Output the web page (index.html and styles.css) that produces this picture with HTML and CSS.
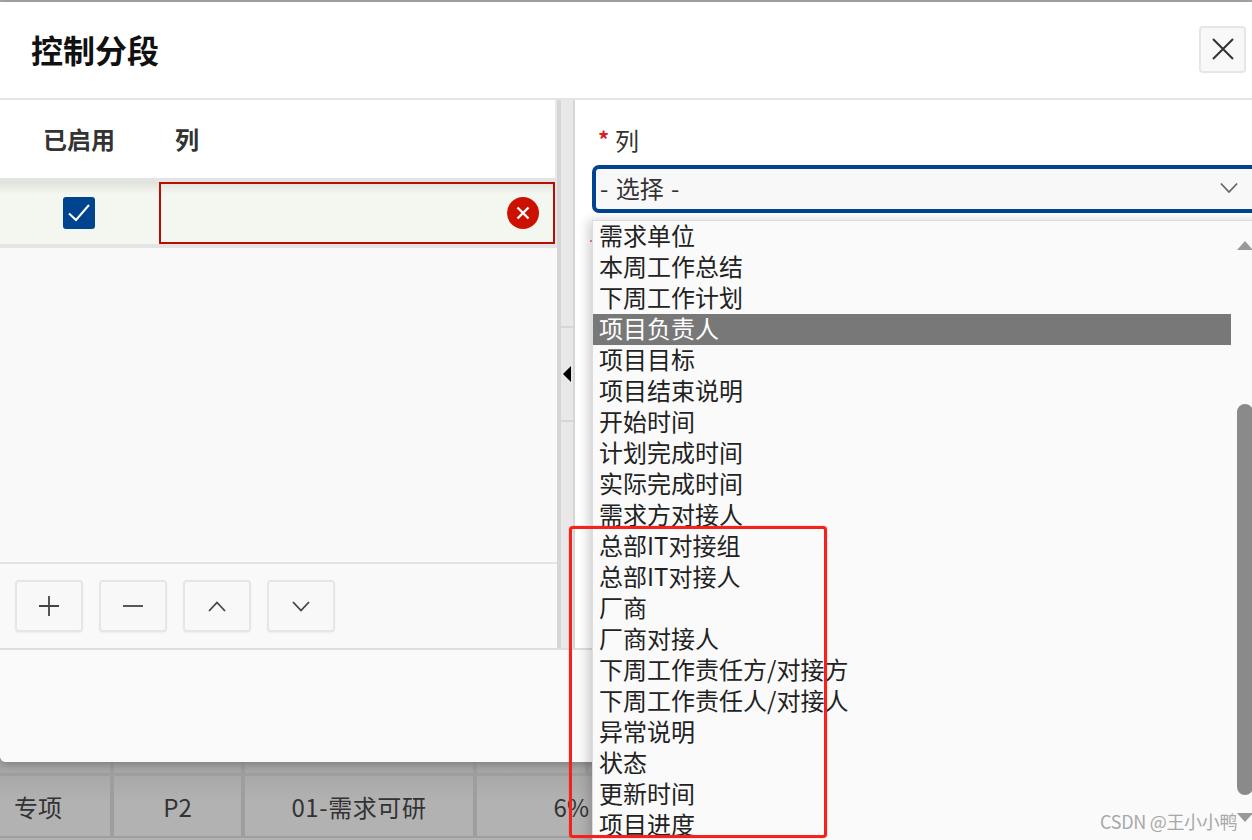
FILE: index.html
```html
<!DOCTYPE html>
<html lang="zh">
<head>
<meta charset="utf-8">
<title>控制分段</title>
<link rel="stylesheet" href="styles.css">
</head>
<body>
<div class="page">
  <div class="dialog">
    <header class="dlg-head">
      <h1 class="dlg-title">控制分段</h1>
      <button class="close-btn" aria-label="关闭">
        <svg width="22" height="22" viewBox="0 0 22 22"><path d="M1 1L21 21M21 1L1 21" class="ico"/></svg>
      </button>
    </header>
    <div class="dlg-body">
      <section class="left">
        <div class="thead">
          <div class="th th-en">已启用</div>
          <div class="th th-col">列</div>
        </div>
        <div class="row">
          <div class="cell-en">
            <span class="check">
              <svg width="24" height="20" viewBox="0 0 24 20"><path d="M2 10.5L9 17L22 2" class="check-path"/></svg>
            </span>
          </div>
          <div class="cell-col">
            <span class="err">
              <svg width="14" height="14" viewBox="0 0 14 14"><path d="M1.5 1.5L12.5 12.5M12.5 1.5L1.5 12.5" class="err-path"/></svg>
            </span>
          </div>
        </div>
        <div class="spacer"></div>
        <div class="toolbar">
          <button class="tool"><svg width="20" height="20" viewBox="0 0 20 20"><path d="M10 0V20M0 10H20" class="ico-thin"/></svg></button>
          <button class="tool"><svg width="20" height="20" viewBox="0 0 20 20"><path d="M0 10H20" class="ico-thin"/></svg></button>
          <button class="tool"><svg width="18" height="11" viewBox="0 0 18 11"><path d="M1 10L9 1.5L17 10" class="ico-thin"/></svg></button>
          <button class="tool"><svg width="18" height="11" viewBox="0 0 18 11"><path d="M1 1L9 9.5L17 1" class="ico-thin"/></svg></button>
        </div>
      </section>
      <div class="gutter"></div>
      <div class="splitter">
        <div class="split-top"></div>
        <div class="split-handle"><span class="tri"></span></div>
        <div class="split-bottom"></div>
      </div>
      <section class="right">
        <div class="label"><span class="star">*</span>列</div>
        <div class="select">
          <span class="select-text">- 选择 -</span>
          <svg width="20" height="12" viewBox="0 0 20 12"><path d="M1 1L10 10.5L19 1" class="ico-light"/></svg>
        </div>
        <div class="field-mark"></div>
      </section>
    </div>
    <div class="dlg-foot"></div>
  </div>
  <div class="bg-table">
    <div class="bg-row bg-row-top">
      <div class="bg-cell"></div><div class="bg-cell"></div><div class="bg-cell"></div><div class="bg-cell"></div>
    </div>
    <div class="bg-row bg-row-main">
      <div class="bg-cell bg-left">专项</div>
      <div class="bg-cell">P2</div>
      <div class="bg-cell bg-wide">01-需求可研</div>
      <div class="bg-cell bg-right">6%</div>
    </div>
  </div>

  <div class="dropdown">
    <ul class="options">
      <li>需求单位</li>
      <li>本周工作总结</li>
      <li>下周工作计划</li>
      <li class="active">项目负责人</li>
      <li>项目目标</li>
      <li>项目结束说明</li>
      <li>开始时间</li>
      <li>计划完成时间</li>
      <li>实际完成时间</li>
      <li>需求方对接人</li>
      <li>总部IT对接组</li>
      <li>总部IT对接人</li>
      <li>厂商</li>
      <li>厂商对接人</li>
      <li>下周工作责任方/对接方</li>
      <li>下周工作责任人/对接人</li>
      <li>异常说明</li>
      <li>状态</li>
      <li>更新时间</li>
      <li>项目进度</li>
    </ul>
    <div class="scroll">
      <span class="arrow-up"></span>
      <span class="thumb"></span>
      <span class="arrow-down"></span>
    </div>
  </div>
  <div class="annot"></div>
  <div class="watermark">CSDN @王小小鸭</div>
</div>
</body>
</html>
```

FILE: styles.css
```css
* { box-sizing: border-box; }
html, body { margin: 0; padding: 0; }
body {
  font-family: "Noto Sans CJK SC", "Noto Sans", sans-serif;
  color: #222;
  background: #ababab;
  overflow: hidden;
}
.page {
  position: relative;
  width: 1252px;
  height: 840px;
  overflow: hidden;
  padding-top: 2px;
  display: flex;
  flex-direction: column;
  background: #a9a9a9;
}
.dialog {
  height: 760px;
  flex: none;
  background: #fafafa;
  border-bottom-left-radius: 6px;
  display: flex;
  flex-direction: column;
  box-shadow: 0 2px 10px rgba(0,0,0,.25);
  position: relative;
  z-index: 1;
}
.dlg-head {
  height: 98px;
  flex: none;
  background: #fff;
  border-bottom: 2px solid #e4e4e4;
  display: flex;
  align-items: center;
  justify-content: space-between;
  padding: 0 6px 2px 31px;
}
.dlg-title {
  margin: 0;
  font-size: 32px;
  line-height: 40px;
  font-weight: 700;
  color: #111;
}
.close-btn {
  width: 47px;
  height: 47px;
  padding: 0;
  background: #f8f8f8;
  border: 2px solid #e6e6e6;
  border-radius: 4px;
  display: flex;
  align-items: center;
  justify-content: center;
}
.ico { fill: none; stroke: #333; stroke-width: 2; }
.ico-thin { fill: none; stroke: #444; stroke-width: 1.8; }
.ico-light { fill: none; stroke: #666; stroke-width: 2; }
.dlg-body {
  height: 550px;
  flex: none;
  display: flex;
  border-bottom: 2px solid #dedede;
}
.left {
  width: 557px;
  flex: none;
  display: flex;
  flex-direction: column;
  background: #f9f9f9;
}
.thead {
  height: 78px;
  flex: none;
  background: #fff;
  border-right: 2px solid #e8e8e8;
  display: flex;
  align-items: center;
  font-size: 24px;
  line-height: 36px;
  font-weight: 700;
  color: #333;
}
.th-en { width: 158px; text-align: center; }
.th-col { padding-left: 17px; }
.row {
  height: 70px;
  flex: none;
  display: flex;
  border-top: 4px solid #e4e4e4;
  border-bottom: 4px solid #e4e4e4;
  border-right: 2px solid #e8e8e8;
  background: linear-gradient(#dfe3dc, #f3f7f0 12px);
}
.cell-en {
  width: 159px;
  display: flex;
  align-items: center;
  justify-content: center;
  padding-right: 2px;
}
.check {
  width: 32px;
  height: 32px;
  background: #00438f;
  border-radius: 3px;
  display: flex;
  align-items: center;
  justify-content: center;
}
.check-path { fill: none; stroke: #fff; stroke-width: 2; }
.cell-col {
  flex: 1;
  border: 2px solid #b80d00;
  display: flex;
  align-items: center;
  justify-content: flex-end;
  padding-right: 14px;
}
.err {
  width: 32px;
  height: 32px;
  border-radius: 50%;
  background: #cc1100;
  display: flex;
  align-items: center;
  justify-content: center;
}
.err-path { fill: none; stroke: #fff; stroke-width: 2.4; }
.spacer { flex: 1; }
.toolbar {
  height: 86px;
  flex: none;
  border-top: 2px solid #e4e4e4;
  display: flex;
  align-items: center;
  gap: 16px;
  padding: 0 0 0 15px;
}
.tool {
  width: 68px;
  height: 52px;
  padding: 0;
  background: #f8f8f8;
  border: 2px solid #e6e6e6;
  border-radius: 4px;
  box-shadow: 0 1px 2px rgba(0,0,0,.05);
  display: flex;
  align-items: center;
  justify-content: center;
}
.gutter {
  width: 4px;
  flex: none;
  background: #d6d6d6;
}
.splitter {
  width: 14px;
  flex: none;
  display: flex;
  flex-direction: column;
  background: #e8e8e8;
  border-right: 2px solid #d6d6d6;
}
.split-top { height: 228px; border-bottom: 2px solid #d6d6d6; }
.split-handle { height: 94px; display: flex; align-items: center; padding-left: 2px; border-bottom: 2px solid #d6d6d6; }
.split-bottom { flex: 1; }
.tri {
  width: 0;
  height: 0;
  border-top: 8px solid transparent;
  border-bottom: 8px solid transparent;
  border-right: 8px solid #000;
}
.right {
  flex: 1;
  min-width: 0;
  background: #fff;
  padding: 22px 0 0 17px;
}
.label {
  font-size: 24px;
  line-height: 36px;
  color: #333;
  padding-left: 6px;
  display: flex;
}
.star { color: #d81e1e; font-size: 22px; font-weight: 700; line-height: 32px; width: 17px; }
.select {
  margin-top: 7px;
  width: 680px;
  height: 48px;
  border: 4px solid #00438f;
  border-radius: 7px;
  background: #f8f8f8;
  display: flex;
  align-items: center;
  justify-content: space-between;
  padding: 0 9px 2px 4px;
  font-size: 24px;
  line-height: 36px;
  color: #333;
  overflow: hidden;
}
.select-text { word-spacing: 2px; }
.select svg { margin-right: 21px; width: 18px; }
.field-mark {
  width: 2px;
  height: 2px;
  margin: 27px 0 0 -2px;
  background: #e88;
}
.dlg-foot { flex: 1; background: #fafafa; border-bottom-left-radius: 6px; }
.bg-table {
  flex: 1;
  background: linear-gradient(#a4a4a4, #b2b2b2 40px);
}
.bg-row {
  display: grid;
  grid-template-columns: 114px 131px 232px 112px;
}
.bg-row-top { height: 14px; border-bottom: 3px solid #9e9e9e; }
.bg-row-main { height: 62px; border-bottom: 2px solid #9e9e9e; }
.bg-cell {
  border-right: 4px solid #9e9e9e;
  text-align: center;
  font-size: 24px;
  line-height: 62px;
  color: #333;
}
.bg-left { text-align: left; padding-left: 14px; }
.bg-wide { letter-spacing: .6px; }
.bg-right { text-align: right; border-right: 0; }
.dropdown {
  position: absolute;
  z-index: 5;
  left: 592px;
  top: 220px;
  width: 680px;
  height: 640px;
  background: #fafafa;
  border-top: 1px solid #ddd;
  border-left: 1px solid #ddd;
  box-shadow: -4px 0 10px rgba(0,0,0,.18);
}
.options {
  list-style: none;
  margin: 0;
  padding: 0;
  width: 638px;
  font-size: 24px;
  line-height: 28px;
  color: #222;
}
.options li { height: 31px; padding-left: 6px; white-space: nowrap; }
.options .active { background: #787878; color: #fff; }
.scroll { position: absolute; left: 638px; top: 0; width: 21px; height: 100%; background: #fafafa; }
.arrow-up {
  position: absolute; left: 6px; top: 20px; width: 0; height: 0;
  border-left: 8px solid transparent; border-right: 8px solid transparent;
  border-bottom: 9px solid #999;
}
.arrow-down {
  position: absolute; left: 6px; top: 592px; width: 0; height: 0;
  border-left: 8px solid transparent; border-right: 8px solid transparent;
  border-top: 9px solid #999;
}
.thumb {
  position: absolute; left: 6px; top: 183px; width: 16px; height: 391px;
  background: #8a8a8a; border-radius: 8px;
}
.annot {
  position: absolute;
  z-index: 6;
  left: 569px;
  top: 526px;
  width: 258px;
  height: 312px;
  border: 3px solid #f5221b;
  border-radius: 4px;
  box-shadow: 0 0 1px #f5221b;
}
.watermark {
  position: absolute;
  z-index: 7;
  left: 1100px;
  top: 809px;
  font-size: 18px;
  line-height: 24px;
  letter-spacing: -.3px;
  color: #a8a8a8;
  white-space: nowrap;
}
```
